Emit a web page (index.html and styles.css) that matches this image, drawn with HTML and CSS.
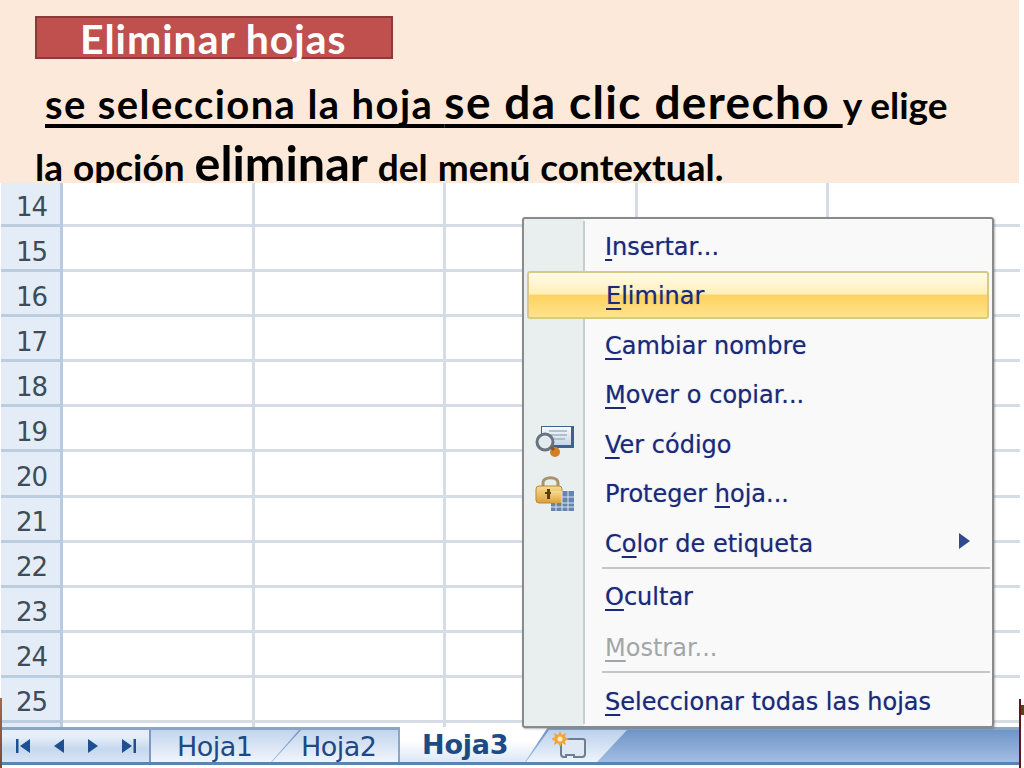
FILE: index.html
```html
<!DOCTYPE html>
<html lang="es">
<head>
<meta charset="utf-8">
<title>Eliminar hojas</title>
<link rel="stylesheet" href="styles.css">
</head>
<body>
<main class="slide">
  <header class="intro">
    <h1 class="pill">Eliminar hojas</h1>
    <p class="line one"><u class="ul"><span class="t40">se selecciona la hoja </span><span class="t46">se da clic derecho </span></u><span class="t37">y elige</span></p>
    <p class="line two"><span class="t37 wide">la opción </span><span class="t49">eliminar</span><span class="t37 wide"> del menú contextual.</span></p>
  </header>
  <section class="sheet">
    <div class="grid">
      <div class="rowhead">14</div><div class="cell"></div><div class="cell"></div><div class="cell"></div><div class="cell"></div><div class="cell last"></div>
      <div class="rowhead">15</div><div class="cell"></div><div class="cell"></div><div class="cell"></div><div class="cell"></div><div class="cell last"></div>
      <div class="rowhead">16</div><div class="cell"></div><div class="cell"></div><div class="cell"></div><div class="cell"></div><div class="cell last"></div>
      <div class="rowhead">17</div><div class="cell"></div><div class="cell"></div><div class="cell"></div><div class="cell"></div><div class="cell last"></div>
      <div class="rowhead">18</div><div class="cell"></div><div class="cell"></div><div class="cell"></div><div class="cell"></div><div class="cell last"></div>
      <div class="rowhead">19</div><div class="cell"></div><div class="cell"></div><div class="cell"></div><div class="cell"></div><div class="cell last"></div>
      <div class="rowhead">20</div><div class="cell"></div><div class="cell"></div><div class="cell"></div><div class="cell"></div><div class="cell last"></div>
      <div class="rowhead">21</div><div class="cell"></div><div class="cell"></div><div class="cell"></div><div class="cell"></div><div class="cell last"></div>
      <div class="rowhead">22</div><div class="cell"></div><div class="cell"></div><div class="cell"></div><div class="cell"></div><div class="cell last"></div>
      <div class="rowhead">23</div><div class="cell"></div><div class="cell"></div><div class="cell"></div><div class="cell"></div><div class="cell last"></div>
      <div class="rowhead">24</div><div class="cell"></div><div class="cell"></div><div class="cell"></div><div class="cell"></div><div class="cell last"></div>
      <div class="rowhead">25</div><div class="cell"></div><div class="cell"></div><div class="cell"></div><div class="cell"></div><div class="cell last"></div>
      <div class="rowhead stub"></div><div class="cell stub"></div><div class="cell stub"></div><div class="cell stub"></div><div class="cell stub"></div><div class="cell last stub"></div>
    </div>
    <footer class="tabbar">
      <div class="navs">
        <svg width="16" height="16" viewBox="0 0 16 16"><path class="nav" d="M1 1h2.500v14H1zM15 1v14L5 8z"/></svg>
        <svg width="12" height="16" viewBox="0 0 12 16"><path class="nav" d="M11 1v14L1 8z"/></svg>
        <svg width="12" height="16" viewBox="0 0 12 16"><path class="nav" d="M1 1v14l10-7z"/></svg>
        <svg width="16" height="16" viewBox="0 0 16 16"><path class="nav" d="M1 1v14l10-7zM12.500 1H15v14h-2.500z"/></svg>
      </div>
      <div class="tab tab1">Hoja1</div>
      <div class="tab tab2">Hoja2</div>
      <div class="tab active">Hoja3</div>
      <div class="tab newtab">
        <svg width="36" height="30" viewBox="0 0 36 30"><path class="ns" d="M10 8h21q2 0 2 2v13q0 3-3 3h-8v-2h-8v2h-2q-3 0-3-3V8z"/><path class="ni" d="M8 0l2 4 4-2-1 4 4 2-4 2 1 4-4-2-2 4-2-4-4 2 1-4-4-2 4-2-1-4 4 2z"/><circle class="nc" cx="8" cy="8" r="2.500"/></svg>
      </div>
    </footer>
    <nav class="menu">
      <div class="item first"><span><u>I</u>nsertar...</span></div>
      <div class="item hot"><span><u>E</u>liminar</span></div>
      <div class="item"><span><u>C</u>ambiar nombre</span></div>
      <div class="item"><span><u>M</u>over o copiar...</span></div>
      <div class="item">
        <svg class="ico code" width="40" height="34" viewBox="0 0 40 34"><defs><linearGradient id="pane" x1="0" y1="0" x2="0" y2="1"><stop offset="0" stop-color="#f7f9fb"/><stop offset="1" stop-color="#c9d6e6"/></linearGradient></defs><rect x="6" y="1" width="33" height="22" fill="#3f6192"/><rect x="7" y="2" width="29" height="18" fill="url(#pane)"/><path d="M14 6h18M14 10h18M18 14h12" stroke="#9fb2c9" stroke-width="1.500"/><circle cx="10" cy="17" r="8" fill="#e3ebf0" stroke="#69737e" stroke-width="3"/><circle cx="20" cy="27" r="5" fill="#d37f26"/><path d="M16 22l3 3" stroke="#8a5a22" stroke-width="3"/></svg>
        <span><u>V</u>er código</span>
      </div>
      <div class="item">
        <svg class="ico lock" width="40" height="36" viewBox="0 0 40 36"><defs><linearGradient id="gold" x1="0" y1="0" x2="0" y2="1"><stop offset="0" stop-color="#f8dc92"/><stop offset="1" stop-color="#dc9f3c"/></linearGradient></defs><path d="M8 12V7c0-7 15-7 15 0v5" fill="none" stroke="#a8946a" stroke-width="3"/><rect x="1" y="10" width="26" height="17" rx="3" fill="url(#gold)" stroke="#b8893a"/><path d="M12 13h3v3h2v2h-2v5h-3v-5h-2v-2h2z" fill="#5a3f12"/><rect x="16" y="15" width="23" height="20" fill="#6585ae"/><rect x="16" y="15" width="11" height="12" fill="url(#gold)"/><path d="M21 27v8M27 15v20M33 15v20M16 31h23M27 21h12M27 27h12" stroke="#dbe5f0" stroke-width="1"/></svg>
        <span>Proteger <u>h</u>oja...</span>
      </div>
      <div class="item"><span>C<u>o</u>lor de etiqueta</span><i class="arrow"></i></div>
      <div class="sep"></div>
      <div class="item tight"><span><u>O</u>cultar</span></div>
      <div class="item off"><span><u>M</u>ostrar...</span></div>
      <div class="sep"></div>
      <div class="item tight"><span><u>S</u>eleccionar todas las hojas</span></div>
    </nav>
    <div class="edge edge-left"></div>
    <div class="edge edge-right"></div>
  </section>
</main>
</body>
</html>
```
FILE: styles.css
```css
* { box-sizing: border-box; }
html, body { margin: 0; padding: 0; }
body { width: 1024px; height: 768px; overflow: hidden; background: #fff; font-family: "Lato", "Liberation Sans", sans-serif; }
.slide { width: 1024px; height: 768px; display: flex; flex-direction: column; position: relative; }
.intro { height: 183px; width: 1019px; background: #fde9d9; padding: 16px 0 0 35px; color: #000; }
.pill { margin: 0; width: 358px; height: 43px; background: #c0504d; border: 2px solid #8c3a38; color: #fff; font-size: 41px; line-height: 41px; font-weight: 700; padding-left: 43px; letter-spacing: 0.950px; white-space: nowrap; }
.line { margin: 0; font-weight: 700; white-space: nowrap; }
.one { padding-left: 10px; margin-top: 20px; line-height: 46px; }
.two { line-height: 58px; margin-top: -3px; }
.ul { text-decoration: underline; text-decoration-thickness: 4px; text-underline-offset: 5px; text-decoration-skip-ink: none; }
.t37 { font-size: 37px; }
.wide { word-spacing: 1px; }
.t40 { font-size: 40px; letter-spacing: 1.400px; }
.t46 { font-size: 46px; letter-spacing: 1.350px; }
.t49 { font-size: 48.500px; }
.sheet { flex: 1; position: relative; display: flex; flex-direction: column; min-height: 0; background: #fff; }
.grid { display: grid; width: 1019px; margin-left: 1px; grid-template-columns: 62px repeat(4, 191.500px) 1fr; grid-template-rows: 44px repeat(11, 45.100px) 4px; height: 544px; }
.rowhead { background: #e4ecf7; border-right: 3px solid #b9cbe2; border-bottom: 3px solid #bdcde0; display: flex; align-items: center; padding: 7px 0 0 15px; font: 26px "DejaVu Sans", sans-serif; letter-spacing: -1px; color: #3d4c58; }
.cell { border-right: 3px solid #d5dce6; border-bottom: 3px solid #d5dce6; background: #fff; }
.last { border-right: 0; }
.stub { border-bottom: 0; padding: 0; }
.tabbar { height: 38px; width: 1019px; display: flex; background: linear-gradient(#6f95c9, #a2bde2); border-top: 3px solid #8ba5c5; border-bottom: 3px solid #5d83b3; position: relative; }
.navs { width: 151px; flex: none; display: flex; align-items: center; gap: 22px; padding-left: 15px; background: linear-gradient(#e6eff9 20%, #c6d8ef 60%, #d9e5f5); border-right: 2px solid #7e99bb; }
.nav { fill: #1d4f91; }
.tab { flex: none; display: flex; align-items: center; color: #1c4a87; font: 27px "DejaVu Sans", sans-serif; letter-spacing: -0.500px; background: linear-gradient(#c3d5ec, #f0f5fc); }
.tab1 { width: 149px; padding-left: 26px; clip-path: polygon(0 0, 148px 0, 120px 100%, 0 100%); }
.tab2 { width: 128px; margin-left: -28px; padding-left: 29px; clip-path: polygon(29px 0, 100% 0, 100% 100%, 0 100%); border-right: 2px solid #8ba5c5; }
.active { width: 148px; height: 35px; margin-top: -3px; padding-left: 22px; background: linear-gradient(#fff 40%, #dbe7f6); font-weight: 700; letter-spacing: -0.200px; clip-path: polygon(0 0, 100% 0, 125px 100%, 0 100%); }
.newtab { width: 102px; margin-left: -23px; padding-left: 27px; background: linear-gradient(#bcd1ec, #eef4fb); clip-path: polygon(24px 0, 100% 0, 72px 100%, 1px 100%); }
.ns { fill: #dfe8f3; stroke: #6b7f93; stroke-width: 2; }
.ni { fill: #f2a53a; }
.nc { fill: #fff1b8; }
.menu { position: absolute; left: 522px; top: 34px; width: 472px; height: 511px; background: linear-gradient(90deg, #e9eeef 60px, #f9f9fa 60px); border: 2px solid #8a8a8a; border-radius: 3px; box-shadow: 1px 1px 2px rgba(90,90,90,.45); color: #1a2a78; font: 24px "DejaVu Sans", sans-serif; display: flex; flex-direction: column; padding-top: 2px; }
.menu::before { content: ""; position: absolute; left: 59px; top: 2px; bottom: 2px; width: 2px; background: #c8cdd0; }
.menu u { text-decoration-thickness: 2px; text-underline-offset: 4px; text-decoration-skip-ink: none; }
.item { height: 49.500px; display: flex; align-items: center; padding-left: 81px; position: relative; white-space: nowrap; flex: none; }
.item span { display: block; padding-top: 4px; text-shadow: 0 0 1px rgba(26,42,120,.45); }
.first { height: 50px; }
.first span, .hot span { padding-top: 2px; }
.hot { background: linear-gradient(#fffbe8 0%, #fff0b8 48%, #fed35f 50%, #fee28e 100%); border: 2px solid #d8c987; border-radius: 3px; margin: 0 3px; padding-left: 77px; height: 48px; z-index: 1; }
.off { color: #a3a6a8; }
.off span { text-shadow: none; }
.tight { height: 53px; }
.ico { position: absolute; left: 11px; }
.code { top: 7px; }
.lock { top: 8px; }
.arrow { position: absolute; right: 22px; top: 16px; border-left: 11px solid #2f4a8f; border-top: 8px solid transparent; border-bottom: 8px solid transparent; }
.sep { height: 2px; background: #c6c6c6; margin-left: 78px; margin-right: 2px; flex: none; position: relative; }
.edge { position: absolute; pointer-events: none; }
.edge-left { left: 0; top: 515px; width: 2px; height: 70px; background: linear-gradient(#a8664a, #7a4a3a); }
.edge-right { left: 1019px; top: 516px; width: 2px; height: 69px; background: #5a1a1e; }
.edge-right::after { content: ""; position: absolute; left: 2px; top: 6px; width: 3px; height: 10px; background: #5b4320; }
```
